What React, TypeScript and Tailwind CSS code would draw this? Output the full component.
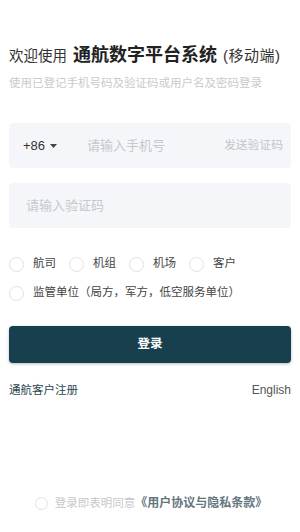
import { useState } from "react";

const FONT = { fontFamily: '"Liberation Sans", "Noto Sans CJK SC", sans-serif' };

const roles = ["航司", "机组", "机场", "客户"];

function Radio({ checked, size = 15 }: { checked: boolean; size?: number }) {
  return (
    <span
      className={`shrink-0 rounded-full border-[1.5px] ${checked ? "border-[#173f4e]" : "border-[#e2e2e2]"} flex items-center justify-center`}
      style={{ width: size, height: size }}
    >
      {checked && <span className="w-[7px] h-[7px] rounded-full bg-[#173f4e]" />}
    </span>
  );
}

export default function App() {
  const [role, setRole] = useState<string | null>(null);
  const [agree, setAgree] = useState(false);

  return (
    <main className="h-[532px] w-full bg-white flex flex-col px-[9px]" style={FONT}>
      {/* Heading */}
      <div className="pt-[43px] flex items-baseline h-[67px] leading-[24px] text-[#333]">
        <span className="text-[14.5px]">欢迎使用</span>
        <span className="ml-[6px] text-[18px] font-bold text-[#222]">通航数字平台系统</span>
        <span className="ml-[6px] text-[15px] tracking-[0.5px]">(移动端)</span>
      </div>
      <p className="mt-[8px] text-[11.5px] leading-[16px] text-[#cacaca]">使用已登记手机号码及验证码或用户名及密码登录</p>

      {/* Phone */}
      <div className="mt-[32px] h-[45px] rounded-[4px] bg-[#f5f6fa] flex items-center pl-[14px] pr-[8px]">
        <span className="text-[13px] text-[#333]">+86</span>
        <svg className="ml-[5px]" width="7" height="4" viewBox="0 0 7 4">
          <path d="M0 0h7L3.5 4z" fill="#444" />
        </svg>
        <input
          className="ml-[30px] flex-1 min-w-0 bg-transparent outline-none text-[13px] text-[#333] placeholder:text-[#c6c8cd]"
          placeholder="请输入手机号"
        />
        <button type="button" className="text-[11.8px] text-[#c3c5ca]">发送验证码</button>
      </div>

      {/* Code */}
      <div className="mt-[15px] h-[45px] rounded-[4px] bg-[#f5f6fa] flex items-center px-[17px]">
        <input
          className="flex-1 min-w-0 bg-transparent outline-none text-[13px] text-[#333] placeholder:text-[#c6c8cd]"
          placeholder="请输入验证码"
        />
      </div>

      {/* Roles */}
      <div className="mt-[27px] flex gap-[13px] h-[18px] items-center">
        {roles.map((r) => (
          <button key={r} type="button" onClick={() => setRole(r)} className="flex items-center gap-[9px] w-[47px]">
            <Radio checked={role === r} />
            <span className="text-[11.5px] text-[#444] whitespace-nowrap">{r}</span>
          </button>
        ))}
      </div>
      <div className="mt-[11px] h-[18px] flex items-center">
        <button type="button" onClick={() => setRole("监管")} className="flex items-center gap-[9px]">
          <Radio checked={role === "监管"} />
          <span className="text-[11.5px] text-[#444] whitespace-nowrap">监管单位（局方，军方，低空服务单位）</span>
        </button>
      </div>

      {/* Submit */}
      <button
        type="button"
        className="mt-[24px] h-[37px] w-full rounded-[4px] bg-[#173f4e] text-white text-[12.5px] font-bold shadow-[0_1px_3px_rgba(23,63,78,0.35)]"
      >
        登录
      </button>

      <div className="mt-[19px] flex justify-between items-center leading-[16px]">
        <span className="text-[11.5px] text-[#2c4651]">通航客户注册</span>
        <span className="text-[12px] text-[#555]">English</span>
      </div>

      {/* Agreement */}
      <div className="mt-auto pb-[21px] flex items-center justify-center leading-[16px] pl-[2px]">
        <button type="button" onClick={() => setAgree((a) => !a)} className="flex items-center">
          <Radio checked={agree} size={13} />
        </button>
        <span className="ml-[7px] text-[11.5px] text-[#c8c8c8] whitespace-nowrap">登录即表明同意</span>
        <span className="text-[12px] font-bold text-[#66767d] whitespace-nowrap">《用户协议与隐私条款》</span>
      </div>
    </main>
  );
}
